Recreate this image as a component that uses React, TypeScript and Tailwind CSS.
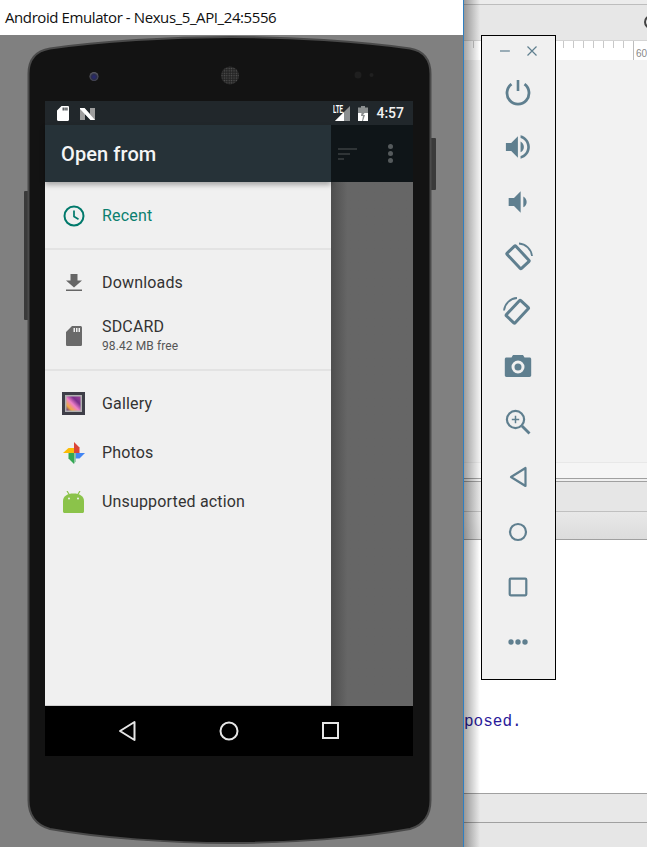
import React from "react";

const ink = "#5f7f8f";

function Ico({ children }: { children: React.ReactNode }) {
  return (
    <svg viewBox="0 0 32 32" className="w-8 h-8" fill="none" stroke={ink} strokeWidth="2.6">
      {children}
    </svg>
  );
}

const tools: React.ReactNode[] = [
  <Ico key="power">
    <path d="M16 4v11" strokeWidth="2.6" />
    <path d="M9.5 8.2a11 11 0 1 0 13 0" strokeWidth="2.8" />
  </Ico>,
  <Ico key="volup">
    <g transform="translate(-.1 0) scale(1.333)" fill={ink} stroke="none">
      <path d="M3 9v6h4l5 5V4L7 9H3zm13.5 3c0-1.77-1.02-3.29-2.5-4.03v8.05c1.48-.73 2.5-2.25 2.5-4.02zM14 3.23v2.06c2.89.86 5 3.54 5 6.71s-2.11 5.85-5 6.71v2.06c4.01-.91 7-4.49 7-8.77s-2.99-7.86-7-8.77z" />
    </g>
  </Ico>,
  <Ico key="voldown">
    <g transform="scale(1.333)" fill={ink} stroke="none">
      <path d="M18.5 12c0-1.77-1.02-3.29-2.5-4.03v8.05c1.48-.73 2.5-2.25 2.5-4.02zM5 9v6h4l5 5V4L9 9H5z" />
    </g>
  </Ico>,
  <Ico key="rotl">
    <rect x="10" y="5.8" width="12" height="21" rx="1" strokeWidth="3" transform="rotate(-43 16 16.3)" />
    <path d="M17 2.500A14 14 0 0 1 30 15" strokeWidth="1.800" />
  </Ico>,
  <Ico key="rotr">
    <rect x="9.300" y="5.200" width="12" height="21" rx="1" strokeWidth="3" transform="rotate(43 15.300 15.700)" />
    <path d="M15 2A14 14 0 0 0 2 14.500" strokeWidth="1.800" />
  </Ico>,
  <Ico key="cam">
    <path
      fillRule="evenodd"
      fill={ink}
      stroke="none"
      d="M11 4h10l1.500 2.600h5c1 0 1.700.7 1.700 1.700v16c0 1-.7 1.700-1.700 1.700H4.500c-1 0-1.700-.7-1.700-1.700v-16c0-1 .7-1.700 1.700-1.700h5L11 4zM16 9.500a6.500 6.500 0 1 0 0 13 6.500 6.500 0 0 0 0-13zM16 12.500a3.500 3.500 0 1 1 0 7 3.500 3.500 0 0 1 0-7z"
    />
  </Ico>,
  <Ico key="zoom">
    <circle cx="13.5" cy="13.5" r="8.6" strokeWidth="2.2" />
    <path d="M20 20l7.5 7.5" strokeWidth="2.8" />
    <path d="M13.5 9.8v7.4M9.8 13.5h7.4" strokeWidth="1.5" />
  </Ico>,
  <Ico key="back">
    <path d="M23.500 7v18L9 16z" strokeWidth="2.2" strokeLinejoin="round" />
  </Ico>,
  <Ico key="home">
    <circle cx="16" cy="16" r="8" strokeWidth="2.2" />
  </Ico>,
  <Ico key="square">
    <rect x="7.7" y="7.7" width="16.6" height="16.6" rx="1" strokeWidth="2.2" />
  </Ico>,
  <Ico key="more">
    <g fill={ink} stroke="none">
      <circle cx="9" cy="16" r="2.700" />
      <circle cx="16" cy="16" r="2.700" />
      <circle cx="23" cy="16" r="2.700" />
    </g>
  </Ico>,
];

function Row({ icon, children, h }: { icon: React.ReactNode; children: React.ReactNode; h: string }) {
  return (
    <div className={`flex items-center ${h}`}>
      <div className="w-[57px] flex justify-center">{icon}</div>
      <div className="text-[16px] leading-[20px] tracking-[0.17px] text-[#333333]">{children}</div>
    </div>
  );
}

function SdIcon({ fill, className }: { fill: string; className: string }) {
  return (
    <svg viewBox="0 0 16 20" className={className}>
      <path
        fill={fill}
        fillRule="evenodd"
        d="M6 0h8.4C15.3 0 16 .7 16 1.6v16.8c0 .9-.7 1.6-1.6 1.6H1.6C.7 20 0 19.300 0 18.400V6zM7.500 2v4h1.500V2zM10 2v4h1.500V2zM12.500 2v4H14V2z"
      />
    </svg>
  );
}

export default function App() {
  return (
    <div className="flex w-[647px] h-[847px] overflow-hidden font-['Roboto',sans-serif]">
      <div className="w-[464px] h-full flex flex-col border-r border-[#2f7fc1]">
        <div className="h-[35px] bg-white flex items-center pl-[5px] pb-[1px] text-[15px] text-[#101010] font-['Open_Sans',sans-serif] tracking-[-0.41px] whitespace-nowrap">
          Android Emulator - Nexus_5_API_24:5556
        </div>
        <div className="relative flex-1 bg-[#808080] pl-[45px] pt-[66px]">
          <svg viewBox="0 35 463 812" className="absolute inset-0 w-[463px] h-[812px]">
            <defs>
              <radialGradient id="lens" cx="0.5" cy="0.55" r="0.5">
                <stop offset="0" stopColor="#26267a" />
                <stop offset="0.6" stopColor="#2b2d4a" />
                <stop offset="1" stopColor="#5a5a62" />
              </radialGradient>
              <pattern id="mesh" width="2.4" height="2.4" patternUnits="userSpaceOnUse">
                <rect width="2.4" height="2.4" fill="#242424" />
                <circle cx="1.2" cy="1.200" r=".7" fill="#555555" />
              </pattern>
            </defs>
            <rect x="24" y="191" width="6" height="129" rx="1" fill="#3a3a3a" />
            <rect x="429" y="138" width="7" height="52" rx="1" fill="#3a3a3a" />
            <path
              d="M28.500 74C28.500 60 35 51 50 48.500C100 41 170 37 230 37C290 37 360 41 410 48.500C424 51 430.500 60 430.500 74L430.500 800C430.500 815 424 825 410 829C360 838 290 843 230 843C170 843 100 838 50 829C36 825 28.500 815 28.500 800Z"
              fill="#131313"
              stroke="#4a4a4a"
              strokeWidth="2"
            />
            <circle cx="94" cy="76.500" r="4.500" fill="url(#lens)" />
            <circle cx="230" cy="75.500" r="9" fill="url(#mesh)" />
            <circle cx="358" cy="75" r="3.500" fill="#1f1f1f" />
            <circle cx="371.500" cy="75" r="2" fill="#202020" />
          </svg>

          <div className="relative w-[368px] h-[655px] flex flex-col">
            <div className="h-[24px] bg-[#21272b] flex items-center pl-[12px] pr-[9px] shrink-0">
              <SdIcon fill="#ffffff" className="w-[12px] h-[15px]" />
              <svg viewBox="0 0 15 13" className="w-[15px] h-[13px] ml-[11px]">
                <path d="M0 1h4.500L10 7V1h5v12h-4.500L5 7v6H0z" fill="#9e9e9e" />
                <path d="M0 1h4.500L15 13h-4.500L0 2z" fill="#ffffff" />
              </svg>
              <div className="flex-1" />
              <svg viewBox="0 0 19 15" className="w-[19px] h-[15px]">
                <path d="M19 0v15H4z" fill="#8b8f90" />
                <path d="M13 6v9H4z" fill="#ffffff" />
              </svg>
              <span className="absolute left-[288px] top-[4px] text-[10px] leading-[10px] font-bold text-white scale-x-[0.62] origin-left">LTE</span>
              <svg viewBox="0 0 10 15" className="w-[10px] h-[15px] ml-[8px]">
                <path d="M3 0h4v1.500h3V15H0V1.500h3z" fill="#8b8f90" />
                <path d="M0 7h3.500L3 10h2L4 15H0zM6.500 7H10v8H5l2-6H5z" fill="#ffffff" />
              </svg>
              <span className="ml-[8px] text-[14px] leading-[20px] font-medium text-[#f2f2f2]">4:57</span>
            </div>

            <div className="flex-1 relative flex flex-col">
              <div className="h-[57px] flex shrink-0 relative z-10">
                <div className="w-[286px] bg-[#263238] pl-[16px] pt-[1px] flex items-center shadow-[0_3px_5px_rgba(0,0,0,0.3)]">
                  <span className="text-[20px] font-medium tracking-[0.1px] text-[#f4f5f5]">Open from</span>
                </div>
                <div className="flex-1 bg-[#0f1518] relative flex items-center pl-[7px]">
                  <div className="flex flex-col gap-[3px]">
                    <div className="w-[19px] h-[2px] bg-[#2f3436]" />
                    <div className="w-[12px] h-[2px] bg-[#2f3436]" />
                    <div className="w-[6px] h-[2px] bg-[#2f3436]" />
                  </div>
                  <div className="ml-[31px] flex flex-col gap-[2px]">
                    <div className="w-[5px] h-[5px] rounded-full bg-[#555a5c]" />
                    <div className="w-[5px] h-[5px] rounded-full bg-[#555a5c]" />
                    <div className="w-[5px] h-[5px] rounded-full bg-[#555a5c]" />
                  </div>
                </div>
              </div>

              <div className="flex-1 flex">
                <div className="w-[286px] bg-[#f0f0f0] flex flex-col border-b border-[#cfcfcf]">
                  <div className="h-[66px] flex items-center pt-[1px]">
                    <div className="w-[57px] flex justify-center">
                      <svg viewBox="0 0 24 24" className="w-[24px] h-[24px]" fill="none" stroke="#00796b" strokeWidth="2">
                        <circle cx="12" cy="12" r="9.500" />
                        <path d="M12 6.500V12.500l4.500 2.700" strokeWidth="1.700" />
                      </svg>
                    </div>
                    <span className="text-[16px] tracking-[0.17px] text-[#0b7f6f]">Recent</span>
                  </div>
                  <div className="h-[2px] bg-[#e3e3e3]" />
                  <div className="h-[9px]" />
                  <Row
                    h="h-[48px]"
                    icon={
                      <svg viewBox="0 0 16 18" className="w-[16px] h-[18px]">
                        <path d="M4.500 0h7v6.500H16L8 13.500 0 6.500h4.500zM0 15.500h16V17H0z" fill="#666666" />
                      </svg>
                    }
                  >
                    Downloads
                  </Row>
                  <div className="h-[57px] flex items-center">
                    <div className="w-[57px] flex justify-center">
                      <SdIcon fill="#6a6a6a" className="w-[16px] h-[20px]" />
                    </div>
                    <div className="flex flex-col pb-[1px]">
                      <span className="text-[16px] leading-[20px] tracking-[0.17px] text-[#333333]">SDCARD</span>
                      <span className="text-[12px] leading-[16px] tracking-[0.1px] text-[#555555] mt-[1px]">98.42 MB free</span>
                    </div>
                  </div>
                  <div className="h-[2px] mt-[5px] bg-[#e3e3e3]" />
                  <div className="h-[8px]" />
                  <Row
                    h="h-[49px]"
                    icon={
                      <svg viewBox="0 0 23 23" className="w-[23px] h-[23px]">
                        <defs>
                          <linearGradient id="gal" x1="1" y1="0" x2="0" y2="1">
                            <stop offset="0" stopColor="#a0429c" />
                            <stop offset="0.3" stopColor="#7a2f8c" />
                            <stop offset="0.55" stopColor="#f080c8" />
                            <stop offset="0.8" stopColor="#f0a840" />
                            <stop offset="1" stopColor="#5a2a80" />
                          </linearGradient>
                        </defs>
                        <rect width="23" height="23" fill="#3e3e48" />
                        <rect x="3" y="3" width="17" height="17" fill="#b0b0b0" />
                        <rect x="4.500" y="4.500" width="14" height="14" fill="url(#gal)" />
                      </svg>
                    }
                  >
                    Gallery
                  </Row>
                  <Row
                    h="h-[49px]"
                    icon={
                      <svg viewBox="0 0 24 24" className="w-[22px] h-[22px]">
                        <path d="M12 12H0l6-5.500h6z" fill="#fbbc05" />
                        <path d="M12 12V0l6 6v6z" fill="#db4437" />
                        <path d="M12 12h12l-6 6h-6z" fill="#4285f4" />
                        <path d="M12 12v12l-6-6v-6z" fill="#34a853" />
                        <path d="M12 12V24l2-3V12z" fill="#8bc4a0" />
                      </svg>
                    }
                  >
                    Photos
                  </Row>
                  <Row
                    h="h-[49px]"
                    icon={
                      <svg viewBox="0 0 21 22" className="w-[21px] h-[22px]">
                        <path d="M4 0l2.500 4M17 0l-2.500 4" stroke="#8bc34a" strokeWidth="1.200" />
                        <path d="M0 10C0 5 4.500 2.500 10.500 2.500S21 5 21 10v10.500c0 .8-.7 1.500-1.500 1.500h-18C.7 22 0 21.300 0 20.500z" fill="#8bc34a" />
                        <circle cx="6" cy="7.500" r="1" fill="#f0f0f0" />
                        <circle cx="15" cy="7.500" r="1" fill="#f0f0f0" />
                      </svg>
                    }
                  >
                    Unsupported action
                  </Row>
                </div>
                <div className="flex-1 bg-gradient-to-r from-[#4e4e4e] via-[#666666] via-[20%] to-[#666666]" />
              </div>
            </div>

            <div className="h-[50px] bg-black flex items-center shrink-0 pb-[1px]">
              <div className="w-[368px] flex items-center pl-[72px]">
                <svg viewBox="0 0 20 22" className="w-[20px] h-[22px]">
                  <path d="M17.500 2v18L3 11z" fill="none" stroke="#e6e6e6" strokeWidth="2" strokeLinejoin="round" />
                </svg>
                <svg viewBox="0 0 20 20" className="w-[20px] h-[20px] ml-[82px]">
                  <circle cx="10" cy="10" r="8.500" fill="none" stroke="#e6e6e6" strokeWidth="2" />
                </svg>
                <div className="w-[17px] h-[17px] border-2 border-[#e6e6e6] ml-[83px]" />
              </div>
            </div>
          </div>
        </div>
      </div>

      <div className="relative flex-1 h-full flex flex-col">
        <div className="h-[4px] bg-[#ececec] shrink-0" />
        <div className="h-[36px] shrink-0 bg-[#e7e7e7] border-t border-[#bdbdbd] relative">
          <div className="absolute right-[-11px] top-[10px] w-[14px] h-[14px] rounded-full border-2 border-[#444444]" />
        </div>
        <div className="h-[20px] shrink-0 bg-white border-t border-[#d4d4d4] flex pl-[9px] relative">
          {Array.from({ length: 17 }).map((_, i) => (
            <div key={i} className={`w-[10px] shrink-0 border-l ${i === 16 ? "h-[19px] border-[#bdbdbd]" : "h-[7px] border-[#c8c8c8]"}`} />
          ))}
          <span className="absolute left-[172px] top-[7px] text-[10px] leading-[12px] text-[#888888] font-['Liberation_Sans',sans-serif]">60</span>
        </div>
        <div className="h-[402px] shrink-0 bg-[#f2f2f2]" />
        <div className="h-[16px] shrink-0 bg-[#f5f5f5] border-t border-[#e8e8e8]" />
        <div className="h-[4px] shrink-0 bg-[#f0f0f0] border-y border-[#a0a0a0]" />
        <div className="h-[30px] shrink-0 bg-[#e6e6e6] border-b border-[#c0c0c0]" />
        <div className="h-[28px] shrink-0 bg-gradient-to-b from-[#e8e8e8] to-[#dcdcdc] border-b border-[#a0a0a0]" />
        <div className="h-[253px] shrink-0 bg-white pt-[173px] font-['Liberation_Mono',monospace] text-[16px] leading-[18px] text-[#2a1a9a]">
          posed.
        </div>
        <div className="h-[29px] shrink-0 bg-[#e8e8e8] border-t border-[#a0a0a0]" />
        <div className="flex-1 bg-[#e6e6e6] border-t border-[#a0a0a0]" />

        <div className="absolute left-0 top-0 bottom-0 w-[16px] bg-gradient-to-r from-[#00000059] to-transparent" />

        <div className="absolute left-[17px] top-[35px] w-[75px] h-[645px] bg-[#f0f0f0] border border-black flex flex-col items-center pr-[1px]">
          <div className="h-[30px] w-full flex items-center justify-center gap-[17px] shrink-0">
            <svg viewBox="0 0 10 10" className="w-[10px] h-[10px]">
              <path d="M0 5h10" stroke={ink} strokeWidth="1.200" />
            </svg>
            <svg viewBox="0 0 10 10" className="w-[10px] h-[10px]">
              <path d="M.5.500l9 9M9.500.500l-9 9" stroke={ink} strokeWidth="1.200" />
            </svg>
          </div>
          <div className="flex flex-col gap-[23px] pt-[10px]">
            {tools.map((t, i) => (
              <div key={i} className="w-8 h-8">
                {t}
              </div>
            ))}
          </div>
        </div>
      </div>
    </div>
  );
}
